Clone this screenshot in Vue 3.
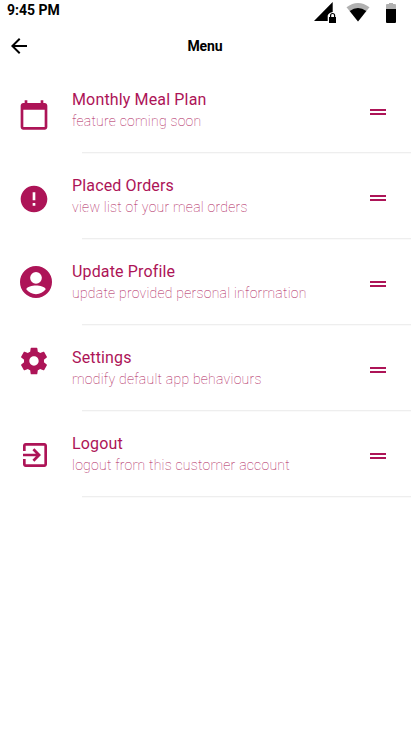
<script setup>
const items = [
  {
    key: 'plan',
    title: 'Monthly Meal Plan',
    note: 'feature coming soon',
    icon: 'M20 3h-1V1h-2v2H7V1H5v2H4c-1.1 0-2 .9-2 2v16c0 1.1.9 2 2 2h16c1.1 0 2-.9 2-2V5c0-1.1-.9-2-2-2zm0 18H4V8h16v13z'
  },
  {
    key: 'orders',
    title: 'Placed Orders',
    note: 'view list of your meal orders',
    icon: 'M12 2C6.48 2 2 6.48 2 12s4.48 10 10 10 10-4.48 10-10S17.52 2 12 2zm1 15h-2v-2h2v2zm0-4h-2V7h2v6z'
  },
  {
    key: 'profile',
    title: 'Update Profile',
    note: 'update provided personal information',
    icon: 'M12 0a12 12 0 1 0 0 24a12 12 0 1 0 0-24zM12 4.5a4.4 4.4 0 1 1 0 8.8a4.4 4.4 0 1 1 0-8.8zM12 21.1c-3 0-5.6-1.4-7.3-3.6c.7-1.9 4.2-2.8 7.3-2.8s6.6.9 7.3 2.8c-1.7 2.2-4.3 3.6-7.3 3.6z'
  },
  {
    key: 'settings',
    title: 'Settings',
    note: 'modify default app behaviours',
    icon: 'M19.43 12.98c.04-.32.07-.64.07-.98s-.03-.66-.07-.98l2.11-1.65c.19-.15.24-.42.12-.64l-2-3.46c-.12-.22-.39-.3-.61-.22l-2.49 1c-.52-.4-1.08-.73-1.69-.98l-.38-2.65C14.46 2.18 14.25 2 14 2h-4c-.25 0-.46.18-.49.42l-.38 2.65c-.61.25-1.17.59-1.69.98l-2.49-1c-.23-.09-.49 0-.61.22l-2 3.46c-.13.22-.07.49.12.64l2.11 1.65c-.04.32-.07.65-.07.98s.03.66.07.98l-2.11 1.65c-.19.15-.24.42-.12.64l2 3.46c.12.22.39.3.61.22l2.49-1c.52.4 1.08.73 1.69.98l.38 2.65c.03.24.24.42.49.42h4c.25 0 .46-.18.49-.42l.38-2.65c.61-.25 1.17-.59 1.69-.98l2.49 1c.23.09.49 0 .61-.22l2-3.46c.12-.22.07-.49-.12-.64l-2.11-1.65zM12 15.5c-1.93 0-3.5-1.57-3.5-3.5s1.57-3.5 3.5-3.5 3.5 1.57 3.5 3.5-1.57 3.5-3.5 3.5z'
  },
  {
    key: 'logout',
    title: 'Logout',
    note: 'logout from this customer account',
    icon: 'M10.09 15.59L11.5 17l5-5-5-5-1.41 1.41L12.67 11H3v2h9.67l-2.58 2.59zM19 3H5c-1.11 0-2 .9-2 2v4h2V5h14v14H5v-4H3v4c0 1.1.89 2 2 2h14c1.1 0 2-.9 2-2V5c0-1.1-.9-2-2-2z'
  }
]
</script>

<template>
  <div class="screen">
    <div class="status">
      <span class="time">9:45 PM</span>
      <svg class="indicators" viewBox="0 0 90 24" aria-hidden="true">
        <path d="M7 21L25.7 2v10q-4 .5-5 3.500v5.500z" />
        <path d="M22 17h1v-1.500a2.600 2.600 0 0 1 5.200 0V17h.8v6h-7zM24.200 17h2.800v-1.500a1.400 1.400 0 0 0-2.800 0z" fill-rule="evenodd" />
        <path d="M39.500 7.200Q51-1.400 62.500 7.200L51 21.500z" fill="#b0b0b0" />
        <path d="M42.700 11Q51 5 59.300 11L51 21.500z" />
        <path d="M79 9V5q0-1 1-1h2V3h4v1h2q1 0 1 1v4z" fill="#b0b0b0" />
        <path d="M79 9h10v13q0 1-1 1h-8q-1 0-1-1z" />
      </svg>
    </div>
    <header class="bar">
      <svg class="back" viewBox="0 0 24 24" aria-hidden="true">
        <path d="M20 11H7.830l5.590-5.590L12 4l-8 8 8 8 1.410-1.410L7.830 13H20v-2z" />
      </svg>
      <h1>Menu</h1>
    </header>
    <ul class="menu">
      <li v-for="item in items" :key="item.key">
        <div class="icon-box" :class="item.key">
          <svg class="icon" viewBox="0 0 24 24" aria-hidden="true">
            <path fill-rule="evenodd" :d="item.icon" />
          </svg>
        </div>
        <div class="copy">
          <span class="title">{{ item.title }}</span>
          <span class="note">{{ item.note }}</span>
        </div>
        <svg class="handle" viewBox="0 0 24 24" aria-hidden="true">
          <path d="M4 9h16v2H4zM4 13h16v2H4z" />
        </svg>
        <div class="rule"></div>
      </li>
    </ul>
  </div>
</template>

<style>
body {
  margin: 0;
  background: #fff;
}
</style>

<style scoped>
.screen {
  height: 731px;
  overflow: hidden;
  background: #fff;
  color: #000;
  font-family: Roboto, sans-serif;
}
svg {
  display: block;
  flex: none;
}
.status {
  display: flex;
  justify-content: space-between;
  height: 24px;
  padding: 0 14px 0 7px;
}
.time {
  font-size: 14px;
  line-height: 20px;
  font-weight: 700;
}
.indicators {
  width: 90px;
  height: 24px;
}
.bar {
  display: grid;
  grid-template-columns: 38px 1fr 39px;
  align-items: center;
  height: 44px;
}
.back {
  width: 24px;
  height: 24px;
  margin-left: 7px;
}
h1 {
  margin: 0;
  font-size: 14px;
  line-height: 20px;
  font-weight: 700;
  letter-spacing: -0.1px;
  text-align: center;
}
.menu {
  margin: 0;
  padding: 0;
  list-style: none;
}
li {
  display: grid;
  grid-template-columns: 72px 1fr 45px;
  grid-template-rows: 84px 2px;
  color: #ad1457;
  fill: #ad1457;
}
.icon-box {
  padding: 29px 0 0 18px;
}
.plan {
  padding-top: 31px;
}
.orders {
  padding-left: 18.4px;
  padding-top: 29.3px;
}
.profile {
  padding: 26px 0 0 20px;
}
.settings {
  padding-top: 19px;
}
.logout {
  padding: 27px 0 0 19px;
}
.icon {
  width: 32px;
  height: 32px;
}
.copy {
  display: flex;
  flex-direction: column;
  padding-top: 21px;
  white-space: nowrap;
}
.title {
  font-size: 16px;
  line-height: 22px;
  letter-spacing: 0.15px;
}
.note {
  margin-top: -1px;
  font-size: 14px;
  line-height: 22px;
  font-weight: 100;
  letter-spacing: 0.25px;
}
.handle {
  width: 24px;
  height: 24px;
  margin-top: 32px;
}
.rule {
  grid-column: 1 / -1;
  height: 1px;
  margin-left: 82px;
  background: #eee;
  box-shadow: 0 1px 0 #fafafa;
}
</style>
